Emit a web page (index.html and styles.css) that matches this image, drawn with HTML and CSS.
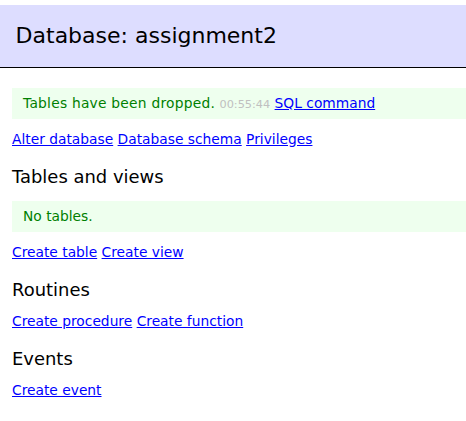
FILE: index.html
```html
<!DOCTYPE html>
<html>
<head>
<meta charset="utf-8">
<link rel="stylesheet" href="styles.css">
</head>
<body>
<div class="content">
<h2 class="title">Database: assignment2</h2>
<div class="message"><span class="wide">Tables have been dropped.</span> <span class="time">00:55:44</span> <a href="#">SQL command</a></div>
<p class="links"><a href="#">Alter database</a> <a href="#">Database schema</a> <a href="#">Privileges</a></p>
<h3 class="section">Tables and views</h3>
<p class="message">No tables.</p>
<p class="links"><a href="#">Create table</a> <a href="#">Create view</a></p>
<h3 class="section">Routines</h3>
<p class="links"><a href="#">Create procedure</a> <a href="#">Create function</a></p>
<h3 class="section">Events</h3>
<p class="links"><a href="#">Create event</a></p>
</div>
</body>
</html>
```
FILE: styles.css
```css
html, body {
  margin: 0;
  padding: 0;
  background: #fff;
}
body {
  font: 13.8px/1.25 "DejaVu Sans", Verdana, sans-serif;
  color: #000;
}
a {
  color: #00f;
}
.content {
  padding: 5px 0 20px 12px;
}
.title {
  font-size: 22px;
  line-height: 27px;
  font-weight: normal;
  margin: 0 0 20px -18px;
  padding: 17px 21.6px 18px;
  border-bottom: 1px solid #000;
  background: #ddf;
  color: #000;
}
.message {
  color: green;
  background: #efe;
  padding: 6.9px 11px;
  margin: 13.5px 0 0 0;
}
.title + .message {
  margin-top: 0;
}
.wide {
  letter-spacing: 0.24px;
}
.time {
  color: silver;
  font-size: 11.3px;
}
.links {
  margin: 11.5px 0 0 0;
}
.section {
  font-weight: normal;
  font-size: 17.94px;
  margin: 17.8px 0 0;
}
```
